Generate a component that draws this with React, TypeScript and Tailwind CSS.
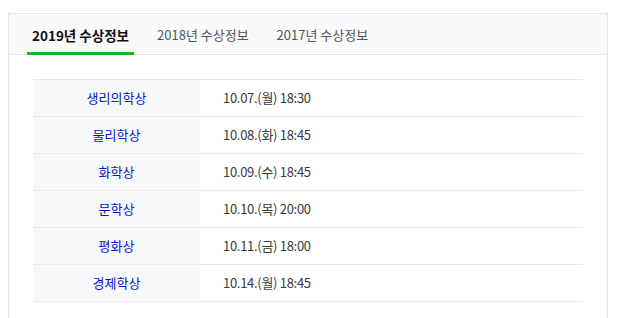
import React, { useState } from "react";

const years = ["2019년 수상정보", "2018년 수상정보", "2017년 수상정보"];

const rows = [
  { prize: "생리의학상", date: "10.07.(월) 18:30" },
  { prize: "물리학상", date: "10.08.(화) 18:45" },
  { prize: "화학상", date: "10.09.(수) 18:45" },
  { prize: "문학상", date: "10.10.(목) 20:00" },
  { prize: "평화상", date: "10.11.(금) 18:00" },
  { prize: "경제학상", date: "10.14.(월) 18:45" },
];

export default function App() {
  const [tab, setTab] = useState(0);

  return (
    <div className="min-h-screen bg-white pt-[13px] pl-2 font-['Noto_Sans_CJK_KR','Noto_Sans',sans-serif]">
      <div className="w-[600px] border border-[#e3e6ea] bg-white pb-6">
        {/* year tabs */}
        <div className="flex h-[41px] gap-[18px] border-b border-[#e1e5ea] bg-[#f9fafc] pl-[18px]">
          {years.map((y, i) => (
            <button
              key={y}
              onClick={() => setTab(i)}
              className={`relative px-[5px] pt-[2px] ${
                tab === i ? "text-[13.5px] font-bold text-[#111]" : "text-[13px] text-[#555]"
              }`}
            >
              {y}
              {tab === i && <span className="absolute left-0 right-0 -bottom-px h-[3px] bg-[#1ab71a]" />}
            </button>
          ))}
        </div>

        {/* schedule table */}
        <div className="mx-6 mt-6 border-t border-[#e8eaee]">
          {rows.map((r) => (
            <div key={r.prize} className="flex h-[37px] border-b border-[#e8eaee] text-[13px]">
              <div className="flex w-[167px] items-center justify-center bg-[#f7f8fa] text-[#0c14d4]">{r.prize}</div>
              <div className="flex items-center pl-[23px] text-[#3a3a3a] tracking-[-0.3px]">{r.date}</div>
            </div>
          ))}
        </div>
      </div>
    </div>
  );
}
